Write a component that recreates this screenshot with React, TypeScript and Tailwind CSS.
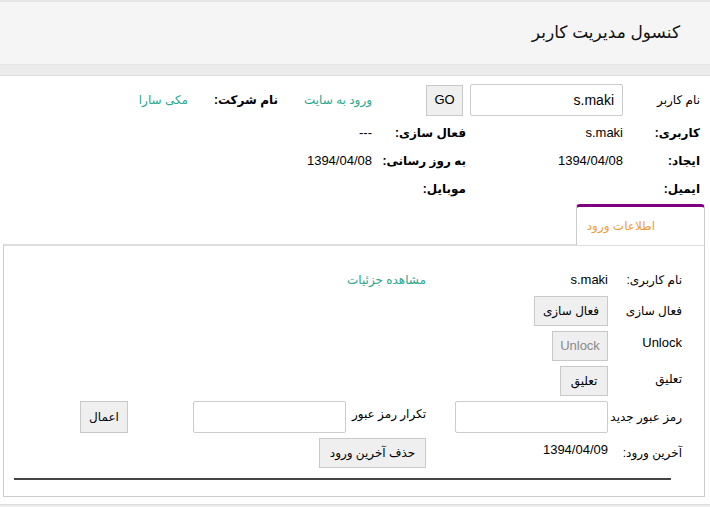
import React from 'react';

const Label: React.FC<{ children: React.ReactNode; bold?: boolean }> = ({ children, bold }) => (
  <div className={`text-[12px] ${bold ? 'font-bold' : ''}`}>{children}</div>
);

const Btn: React.FC<{ children: React.ReactNode; disabled?: boolean; className?: string }> = ({ children, disabled, className = '' }) => (
  <button
    disabled={disabled}
    className={`h-[30px] bg-[#efefef] border border-[#c9c9c9] ${disabled ? 'text-[#8a8a8a]' : 'text-black'} ${className}`}
  >
    {children}
  </button>
);

const App: React.FC = () => {
  return (
    <div dir="rtl" className="w-[710px] min-h-[507px] bg-white text-black font-['Liberation_Sans','DejaVu_Sans',sans-serif]">
      {/* header */}
      <div className="h-[65px] bg-[#f5f5f5] border-t-2 border-b border-[#e6e6e6] flex items-center pr-[30px]">
        <h1 className="text-[17px] text-[#111]">کنسول مدیریت کاربر</h1>
      </div>
      <div className="h-[11px] bg-[#ebebeb] border-b border-[#dcdcdc]" />

      {/* user summary */}
      <div className="pt-[8px] pr-[10px]">
        <div className="grid grid-cols-[77px_157px_94px_94px_90px_1fr] items-center h-[32px]">
          <Label>نام کاربر</Label>
          <input
            defaultValue="s.maki"
            className="w-[153px] h-[32px] border border-[#cccccc] rounded-[2px] px-[8px] text-[14px] text-right outline-none"
          />
          <div className="pr-[3px]">
            <button className="h-[31px] w-[37px] bg-[#efefef] border border-[#c9c9c9] text-[13px]">GO</button>
          </div>
          <a className="text-[12px] text-[#2aa68a]">ورود به سایت</a>
          <Label bold>نام شرکت:</Label>
          <a className="text-[12px] text-[#2aa68a]">مکی سارا</a>
        </div>
        <div className="grid grid-cols-[77px_157px_94px_94px_1fr] items-center h-[28px] mt-[3px]">
          <Label bold>کاربری:</Label>
          <div className="text-[13px]">s.maki</div>
          <Label bold>فعال سازی:</Label>
          <div className="text-[13px]">---</div>
          <div />
        </div>
        <div className="grid grid-cols-[77px_157px_94px_94px_1fr] items-center h-[28px]">
          <Label bold>ایجاد:</Label>
          <div className="text-[13px]">1394/04/08</div>
          <Label bold>به روز رسانی:</Label>
          <div className="text-[13px]">1394/04/08</div>
          <div />
        </div>
        <div className="grid grid-cols-[77px_157px_94px_94px_1fr] items-center h-[28px]">
          <Label bold>ایمیل:</Label>
          <div />
          <Label bold>موبایل:</Label>
          <div />
          <div />
        </div>
      </div>

      {/* tabs + panel */}
      <div className="pl-[3px] pr-[5px] mt-px">
        <div className="flex">
          <div className="w-[129px] h-[41px] -mb-px relative z-10 bg-white border-t-[3px] border-t-[#800080] border-x border-x-[#cccccc] rounded-t-[4px] flex items-center pr-[49px]">
            <span className="text-[12px] text-[#f39c33]">اطلاعات ورود</span>
          </div>
        </div>
        <div className="border-t-2 border-t-[#dddddd] border-x border-b border-[#cccccc] pt-[20px] pr-[22px] pb-[16px]">
          <div className="grid grid-cols-[74px_182px_1fr] items-center h-[28px]">
            <Label>نام کاربری:</Label>
            <div className="text-[13px]">s.maki</div>
            <a className="text-[12px] text-[#2aa68a]">مشاهده جزئیات</a>
          </div>
          <div className="grid grid-cols-[74px_1fr] items-center h-[30px] mt-[2px]">
            <Label>فعال سازی</Label>
            <div><Btn className="w-[74px] text-[12px]">فعال سازی</Btn></div>
          </div>
          <div className="grid grid-cols-[74px_1fr] items-center h-[30px] mt-[5px]">
            <div className="text-[13px] pb-[6px]">Unlock</div>
            <div><Btn disabled className="w-[56px] text-[13px]">Unlock</Btn></div>
          </div>
          <div className="grid grid-cols-[74px_1fr] items-center h-[30px] mt-[5px]">
            <div className="text-[12px] pb-[4px]">تعلیق</div>
            <div><Btn className="w-[48px] text-[12px]">تعلیق</Btn></div>
          </div>
          <div className="grid grid-cols-[74px_182px_80px_218px_1fr] items-center h-[32px] mt-[5px]">
            <Label>رمز عبور جدید</Label>
            <input className="w-[153px] h-[32px] border border-[#cccccc] rounded-[2px] outline-none" />
            <div className="text-[12px] pb-[6px]">تکرار رمز عبور</div>
            <input className="w-[153px] h-[32px] border border-[#cccccc] rounded-[2px] outline-none" />
            <div><Btn className="h-[32px] w-[48px] text-[12px]">اعمال</Btn></div>
          </div>
          <div className="grid grid-cols-[74px_182px_1fr] items-center h-[30px] mt-[5px]">
            <Label>آخرین ورود:</Label>
            <div className="text-[13px] pb-[6px]">1394/04/09</div>
            <div><Btn className="w-[107px] text-[12px]">حذف آخرین ورود</Btn></div>
          </div>
          <div className="h-[2px] bg-[#444444] mt-[10px] ml-[10px] mr-[11px]" />
        </div>
      </div>
      <div className="mt-[7px] h-[4px] bg-[#ebebeb] border-t border-[#dddddd]" />
    </div>
  );
};

export default App;
